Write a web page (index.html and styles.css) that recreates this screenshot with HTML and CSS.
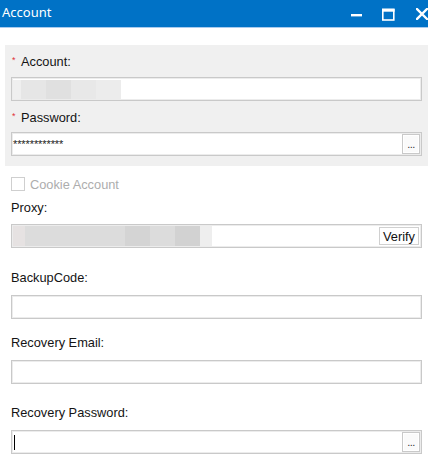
FILE: index.html
```html
<!DOCTYPE html>
<html>
<head>
<meta charset="utf-8">
<link rel="stylesheet" href="styles.css">
</head>
<body>
<div class="window">
  <div class="titlebar">
    <span class="title">Account</span>
    <div class="controls">
      <svg class="ctl ctl-min" width="12" height="12" viewBox="0 0 12 12"><rect x="0" y="5" width="11" height="2.4" fill="#fff"/></svg>
      <svg class="ctl ctl-max" width="13" height="13" viewBox="0 0 13 13"><rect x="0.8" y="1.5" width="11" height="10.5" fill="none" stroke="#fff" stroke-width="1.6"/><rect x="0" y="0.7" width="12.6" height="3" fill="#fff"/></svg>
      <svg class="ctl ctl-close" width="12" height="12" viewBox="0 0 12 12"><path d="M1 1 L11 11 M11 1 L1 11" stroke="#fff" stroke-width="2.4" stroke-linecap="square"/></svg>
    </div>
  </div>
  <div class="titleline"></div>

  <div class="content">
    <div class="panel">
      <div class="label"><span class="req">*</span>Account:</div>
      <div class="input input-first">
        <div class="redact">
          <span class="blk" style="width:8px;background:#efefef"></span>
          <span class="blk" style="width:25px;background:#e6e6e6"></span>
          <span class="blk" style="width:25px;background:#e0e0e0"></span>
          <span class="blk" style="width:25px;background:#e8e8e8"></span>
          <span class="blk" style="width:25px;background:#ececec"></span>
        </div>
      </div>
      <div class="label label-pw"><span class="req">*</span>Password:</div>
      <div class="input input-pw">
        <span class="stars">************</span>
        <span class="dots-btn"><span class="dots">...</span></span>
      </div>
    </div>

    <div class="fields">
      <div class="check-row">
        <span class="checkbox"></span>
        <span class="check-text">Cookie Account</span>
      </div>

      <div class="label label-proxy">Proxy:</div>
      <div class="input">
        <div class="redact">
          <span class="blk" style="width:12px;background:#e6e2e2"></span>
          <span class="blk" style="width:100px;background:#dcdcdc"></span>
          <span class="blk" style="width:25px;background:#d4d4d4"></span>
          <span class="blk" style="width:25px;background:#dcdcdc"></span>
          <span class="blk" style="width:25px;background:#d2d2d2"></span>
          <span class="blk" style="width:12px;background:#eeeeee"></span>
        </div>
        <span class="verify">Verify</span>
      </div>

      <div class="label label-backup">BackupCode:</div>
      <div class="input"></div>

      <div class="label label-email">Recovery Email:</div>
      <div class="input"></div>

      <div class="label label-rpw">Recovery Password:</div>
      <div class="input input-pw">
        <span class="caret"></span>
        <span class="dots-btn"><span class="dots">...</span></span>
      </div>
    </div>
  </div>
</div>
</body>
</html>
```
FILE: styles.css
```css
* { box-sizing: border-box; }
html, body {
  margin: 0;
  padding: 0;
  background: #fff;
  width: 428px;
  height: 466px;
  overflow: hidden;
}
body {
  font-family: "Liberation Sans", Arial, sans-serif;
  font-size: 12.8px;
  color: #141414;
}
.titlebar {
  height: 27px;
  background: #0072c6;
  display: flex;
  align-items: center;
  justify-content: space-between;
  padding-left: 2px;
}
.title {
  font-family: "Noto Sans", "Open Sans", sans-serif;
  font-size: 13px;
  color: #fff;
  line-height: 16px;
  margin-top: -3px;
}
.controls {
  display: flex;
  align-items: center;
  height: 27px;
}
.ctl { display: block; }
.ctl-min { margin-right: 19px; margin-top: 3px; }
.ctl-max { margin-right: 21px; margin-top: 1px; }
.ctl-close { margin-right: 0; margin-top: 1px; }
.titleline {
  height: 1px;
  background: #a9cbee;
}
.content {
  padding-top: 17px;
}
.panel {
  margin-left: 5px;
  background: #f0f0f0;
  padding: 9px 6px 10px 6px;
}
.fields {
  padding: 0 6px 0 11px;
}
.label {
  height: 16px;
  line-height: 16px;
  white-space: nowrap;
  display: flex;
  align-items: center;
}
.req {
  color: #e0303a;
  font-size: 9px;
  line-height: 9px;
  width: 9px;
  margin-left: 1px;
  align-self: flex-start;
  margin-top: 2px;
}
.input {
  margin-top: 8px;
  height: 24px;
  background: #fff;
  border: 1px solid #c9c9c9;
  box-shadow: inset 0 0 0 1px #ececec;
  display: flex;
  align-items: center;
  position: relative;
}
.input-first { margin-top: 7px; }
.label-pw { margin-top: 9px; }
.panel .input-pw { margin-top: 6px; }
.redact {
  display: flex;
  height: 20px;
  margin-left: 1px;
}
.input-first .redact { height: 19px; }
.blk { display: block; height: 100%; }
.stars {
  font-size: 11px;
  line-height: 11px;
  margin-left: 1px;
  margin-top: 0;
  letter-spacing: -0.1px;
  color: #222;
}
.dots-btn {
  position: absolute;
  right: 1px;
  top: 1px;
  width: 18px;
  height: 20px;
  border: 1px solid #c9c9c9;
  background: #fafafa;
  box-shadow: inset 0 0 0 1px #fff;
  display: flex;
  align-items: flex-end;
  justify-content: center;
}
.dots {
  font-size: 11px;
  line-height: 11px;
  color: #333;
  margin-bottom: 3px;
  letter-spacing: -0.5px;
}
.verify {
  position: absolute;
  right: 2px;
  top: 2px;
  height: 18px;
  width: 40px;
  border: 1px solid #d0d0d0;
  background: #fff;
  display: flex;
  align-items: center;
  justify-content: center;
  font-size: 12.8px;
  color: #111;
}
.check-row {
  margin-top: 10px;
  height: 16px;
  display: flex;
  align-items: center;
}
.checkbox {
  width: 14px;
  height: 14px;
  border: 1px solid #cfcfcf;
  background: #fff;
  display: block;
}
.check-text {
  margin-left: 5px;
  color: #adadad;
}
.label-proxy { margin-top: 8px; }
.label-backup { margin-top: 22px; }
.label-backup + .input { margin-top: 9px; }
.label-email { margin-top: 16px; }
.label-email + .input { margin-top: 9px; }
.label-rpw { margin-top: 21px; }
.fields .input-pw { margin-top: 9px; }
.caret {
  display: block;
  width: 1px;
  height: 15px;
  background: #000;
  margin-left: 2px;
}
```
